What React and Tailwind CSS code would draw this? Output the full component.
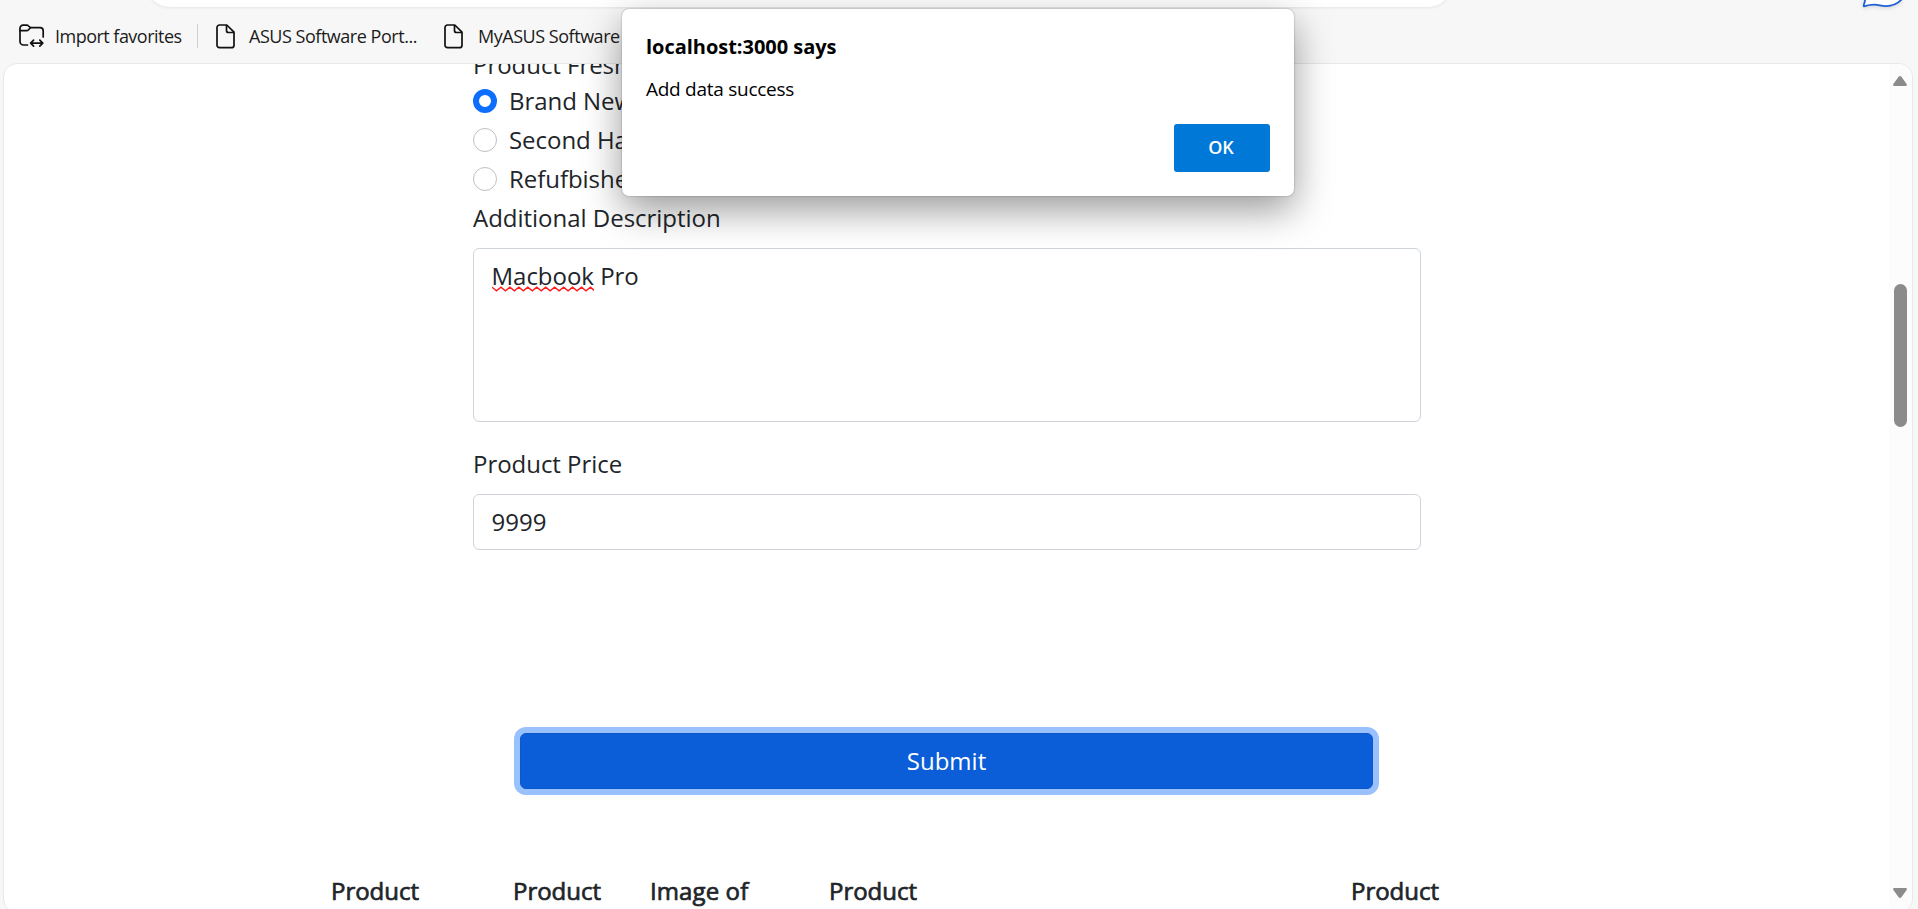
function FolderImportIcon() {
  return (
    <svg className="h-[25px] w-[26px] shrink-0" viewBox="0 0 26 25" fill="none" stroke="#111" strokeWidth="1.7" strokeLinecap="round" strokeLinejoin="round">
      <path d="M8.5 21H4.5a3.5 3.5 0 0 1-3.5-3.500V4.200a3 3 0 0 1 3-3h3.600c.8 0 1.500.3 2 .8l1.800 1.700h9.600a3.200 3.200 0 0 1 3.200 3.200V13" />
      <path d="M1 6.600h6.500c.9 0 1.600-.3 2.100-.9l1.800-2" />
      <path d="M11.800 19.200h11.900M14.600 16.200l-3 3 3 3M20.800 16.200l3 3-3 3" />
    </svg>
  );
}

function FileIcon() {
  return (
    <svg className="h-[25px] w-[19px] shrink-0" viewBox="0 0 19 25" fill="none" stroke="#111" strokeWidth="1.7" strokeLinejoin="round">
      <path d="M3.500 1h7.300l7.200 7.200v13a2.500 2.500 0 0 1-2.500 2.500h-12A2.500 2.500 0 0 1 1 21.200V3.500A2.500 2.500 0 0 1 3.500 1Z" />
      <path d="M10.500 1v5.500c0 1.100.9 2 2 2H18" />
    </svg>
  );
}

function BrowserBar() {
  return (
    <header className="flex h-[63px] shrink-0 flex-col overflow-hidden">
      <div className="flex h-[7px] shrink-0 justify-between pl-[146px]">
        <div className="-mt-[41px] h-12 w-[1306px] rounded-3xl bg-white shadow-[0_1px_3px_rgba(0,0,0,0.08)]" />
        <svg className="mr-[9px] h-[10px] w-[46px] shrink-0 overflow-visible" viewBox="0 0 46 10" fill="#fff" stroke="#1f5fd6" strokeWidth="1.800" strokeLinejoin="round">
          <path className="drop-shadow-sm" d="M2.500-3Q2 2 .8 5q-.5 1.500 1 1.200 8-2.500 15-.8 13 3 22-6" />
        </svg>
      </div>
      <nav className="flex h-[56px] items-center pt-[2px] pl-[19px] font-['Open_Sans',sans-serif] text-[18px] text-[#1b1b1b]">
        <FolderImportIcon />
        <span className="ml-[10px] w-[142px] whitespace-nowrap tracking-[-0.52px]">Import favorites</span>
        <span className="h-6 w-px bg-[#cfcfcf]" />
        <span className="ml-[18px] flex shrink-0"><FileIcon /></span>
        <span className="ml-[14px] w-[195px] whitespace-nowrap tracking-[-0.47px]">ASUS Software Port...</span>
        <FileIcon />
        <span className="ml-[15px] whitespace-nowrap tracking-[-0.47px]">MyASUS Software</span>
      </nav>
    </header>
  );
}

function Radio({ label, checked }) {
  return (
    <label className="mb-[3px] flex h-9 items-center gap-3 whitespace-nowrap tracking-[-0.04px]">
      <span className={checked ? "size-6 rounded-full border-[6px] border-[#0d6efd] bg-white" : "size-6 rounded-full border border-[#bfbfbf] bg-white"} />
      {label}
    </label>
  );
}

function SpellingMark() {
  return (
    <svg className="absolute bottom-0 left-0 h-[6px] w-full" viewBox="0 0 103 6" preserveAspectRatio="none" fill="none" stroke="#ff1a1a" strokeWidth="1.400">
      <path d="M0 1.200l4.500 3.600L9 1.200l4.500 3.600L18 1.200l4.500 3.600L27 1.200l4.500 3.600L36 1.200l4.500 3.600L45 1.200l4.500 3.600L54 1.200l4.500 3.600L63 1.200l4.500 3.600L72 1.200l4.500 3.600L81 1.200l4.500 3.600L90 1.200l4.500 3.600L99 1.200l4 3.400" />
    </svg>
  );
}

function Scrollbar() {
  return (
    <div className="flex w-[23px] shrink-0 flex-col items-center bg-[#fcfcfc] pt-[12px] pr-px">
      <svg className="h-[10px] w-[14px] shrink-0" viewBox="0 0 14 10" fill="#8b8b8b"><path d="M5.600.8Q7-.7 8.400.8L13.600 8Q14.400 10 12.800 10H1.200Q-.4 10 .4 8Z" /></svg>
      <div className="mt-[198px] h-[143px] w-[13px] shrink-0 rounded-full bg-[#8b8b8b]" />
      <svg className="mt-[461px] h-[10px] w-[14px] shrink-0" viewBox="0 0 14 10" fill="#8b8b8b"><path d="M5.600 9.200Q7 10.700 8.400 9.200L13.600 2Q14.400 0 12.800 0H1.200Q-.4 0 .4 2Z" /></svg>
    </div>
  );
}

function ProductForm() {
  return (
    <form className="ml-[469px] flex w-[948px] flex-col">
      <div className="-mt-[17px] h-9 tracking-[-0.04px]">Product Freshness</div>
      <Radio label="Brand New" checked />
      <Radio label="Second Hand" />
      <Radio label="Refufbished" />
      <div className="mb-3 h-9 tracking-[-0.02px]">Additional Description</div>
      <div className="h-[174px] rounded-md border border-[#ced4da] px-[17.5px] py-[9px] tracking-[-0.02px]">
        <span className="relative">Macbook<SpellingMark /></span> Pro
      </div>
      <div className="mt-6 mb-3 h-9 tracking-[-0.04px]">Product Price</div>
      <div className="h-14 rounded-md border border-[#ced4da] px-[17.5px] py-[9px]">9999</div>
      <button type="button" className="mt-[183px] ml-[47px] h-14 w-[853px] shrink-0 rounded-md border border-[#0a58ca] bg-[#0b5ed7] text-white ring-6 ring-[#98c1fe]">
        Submit
      </button>
    </form>
  );
}

function TableHeader() {
  return (
    <div className="mt-[84px] ml-[327px] flex whitespace-nowrap tracking-[-0.02px] [-webkit-text-stroke:0.7px_#212529]">
      <span className="w-[182px]">Product</span>
      <span className="w-[137px]">Product</span>
      <span className="w-[179px] tracking-[0.1px]">Image of</span>
      <span className="w-[522px]">Product</span>
      <span>Product</span>
    </div>
  );
}

function AlertDialog() {
  return (
    <div role="dialog" className="absolute top-[9px] left-[622px] flex h-[187px] w-[672px] flex-col rounded-[7px] bg-white px-6 font-['Open_Sans',sans-serif] text-black shadow-[0_0_2px_rgba(0,0,0,0.35),0_14px_38px_rgba(0,0,0,0.4)]">
      <h1 className="mt-[22px] h-8 text-[20px] leading-8 font-bold tracking-[-0.03px]">localhost:3000 says</h1>
      <p className="mt-[12px] h-7 text-[19px] leading-7 tracking-[-0.27px]">Add data success</p>
      <button type="button" className="mt-[21px] h-12 w-24 self-end rounded-[3px] bg-[#0078d7] pr-[2px] pb-[2px] text-[18px] font-semibold text-white">OK</button>
    </div>
  );
}

export default function App() {
  return (
    <div className="relative flex h-[909px] w-[1918px] flex-col overflow-hidden bg-[#f7f7f7]">
      <BrowserBar />
      <main className="mr-[5px] ml-[3px] flex h-[850px] shrink-0 overflow-hidden rounded-[14px] border border-[#e7e7e7] bg-white">
        <div className="min-w-0 flex-1 overflow-hidden font-['Open_Sans',sans-serif] text-[24px] leading-9 text-[#212529]">
          <ProductForm />
          <TableHeader />
        </div>
        <Scrollbar />
      </main>
      <AlertDialog />
    </div>
  );
}
